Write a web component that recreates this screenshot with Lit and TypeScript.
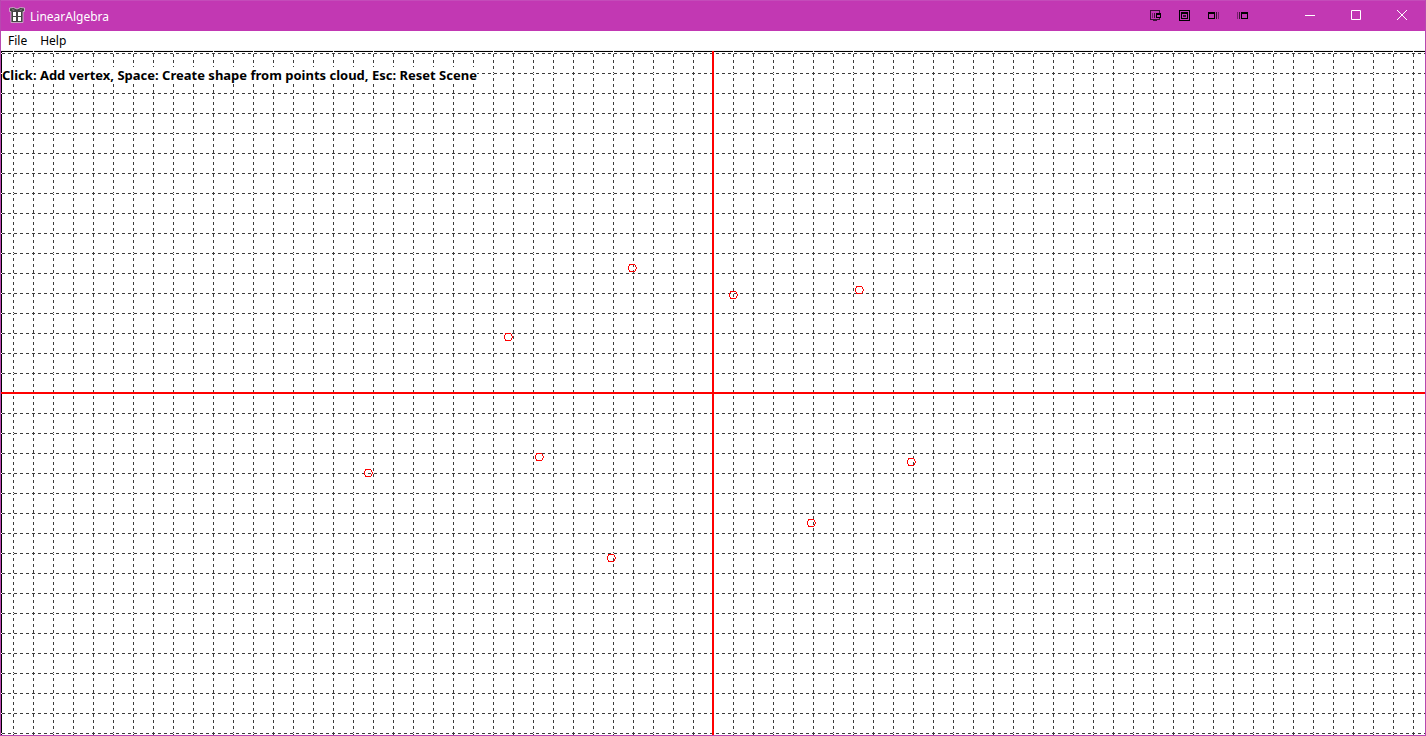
import { LitElement, html, css, svg } from "lit";
import { customElement, state } from "lit/decorators.js";

type Point = [number, number];

/** Window title bar with system tools and caption buttons. */
@customElement("title-bar")
class TitleBar extends LitElement {
  static styles = css`
    :host {
      display: flex;
      align-items: flex-start;
      height: 31px;
      box-sizing: border-box;
      border-top: 1px solid #c44cba;
      background: #c238b3;
      color: #fff;
      font: 12px/16px "Noto Sans", "Open Sans", sans-serif;
    }
    svg { display: block; }
    .logo { margin: 6px 5px 0 8px; }
    h1 { flex: 1; margin: 0; font: inherit; padding-top: 8px; }
    button {
      display: flex;
      align-items: center;
      justify-content: center;
      padding: 0;
      border: 0;
      background: none;
      color: inherit;
      height: 28px;
    }
    .tools { display: flex; margin-right: 30px; }
    .tools button { width: 29px; }
    .caption { display: flex; }
    .caption button { width: 46px; }
  `;

  render() {
    return html`
      <svg class="logo" width="16" height="16" viewBox="0 0 16 16">
        <path d="M.5 1l4-.5L8 2l3.500-1.500L15.500 1v3.500H14v11H2v-11H.5z" fill="#444" stroke="#d9c3d6" stroke-width=".8" />
        <path d="M4 5h3v4H4zM9 5h3v4H9zM4 10h3v4H4zM9 10h3v4H9z" fill="#fff" />
        <path d="M3 2l3 1-2 1zM13 2l-3 1 2 1z" fill="#888" />
      </svg>
      <h1>LinearAlgebra</h1>
      <div class="tools">
        <button aria-label="Dock window">
          <svg width="11" height="11" shape-rendering="crispEdges">
            <path d="M.5.5h9v9h-9z" fill="none" stroke="#3a1136" />
            <path d="M2 3h1v5H2z" fill="#761f6d" />
            <path d="M4 3h1v5H4zM3 10h4v1H3z" fill="#3a1136" />
            <path d="M6 3h5v5H6z" />
            <path d="M7 5h3v2H7z" fill="#c238b3" />
          </svg>
        </button>
        <button aria-label="Center window">
          <svg width="11" height="11" shape-rendering="crispEdges">
            <path d="M.5.5h10v10H.5zM2.5 2.5h6v6h-6z" fill="none" stroke="#000" />
            <path d="M2 2h7v2H2z" />
            <path d="M4 5h3v2H4z" fill="#3a1136" />
          </svg>
        </button>
        <button aria-label="Move to left monitor">
          <svg width="11" height="11" shape-rendering="crispEdges">
            <path d="M.5 2.5h6v6h-6z" fill="none" stroke="#000" />
            <path d="M0 2h7v2H0z" />
            <path d="M8 2h1v7H8z" fill="#3a1136" />
            <path d="M10 2h1v7h-1z" fill="#761f6d" />
          </svg>
        </button>
        <button aria-label="Move to right monitor">
          <svg width="11" height="11" shape-rendering="crispEdges">
            <path d="M4.5 2.5h6v6h-6z" fill="none" stroke="#000" />
            <path d="M4 2h7v2H4z" />
            <path d="M2 2h1v7H2z" fill="#3a1136" />
            <path d="M0 2h1v7H0z" fill="#761f6d" />
          </svg>
        </button>
      </div>
      <div class="caption">
        <button aria-label="Minimize">
          <svg width="10" height="10" stroke="#fff"><path d="M0 5.5h10" /></svg>
        </button>
        <button aria-label="Maximize">
          <svg width="10" height="10" stroke="#fff" fill="none"><path d="M.5.5h9v9h-9z" /></svg>
        </button>
        <button aria-label="Close">
          <svg width="10" height="10" stroke="#fff"><path d="M0 0l10 10M10 0L0 10" /></svg>
        </button>
      </div>
    `;
  }
}

/** Drawing surface: dotted grid, axes through the centre and the vertices. */
@customElement("grid-scene")
class GridScene extends LitElement {
  static styles = css`
    :host {
      display: block;
      position: relative;
      overflow: hidden;
      background: #fff;
    }
    .canvas { position: absolute; inset: 0; width: 100%; height: 100%; }
    .hint {
      position: relative;
      display: inline-block;
      margin: 16px 0 0 1px;
      background: #fff;
      color: #000;
      font: bold 13px/16px "Noto Sans", "Open Sans", sans-serif;
      white-space: nowrap;
    }
  `;

  @state() points: Point[] = [
    [-81, -125], [20, -98], [146, -103], [-205, -56],
    [-345, 80], [-174, 64], [198, 69], [98, 130], [-102, 165],
  ];
  @state() private size = { w: 1424, h: 684 };

  private observer = new ResizeObserver(([entry]) => {
    this.size = { w: entry.contentRect.width, h: entry.contentRect.height };
  });

  connectedCallback() {
    super.connectedCallback();
    this.observer.observe(this);
  }

  disconnectedCallback() {
    super.disconnectedCallback();
    this.observer.disconnect();
  }

  render() {
    const { w, h } = this.size;
    const cx = Math.floor(w / 2);
    const cy = Math.floor(h / 2);
    const step = 20;
    let columns = "";
    let rows = "";
    for (let x = cx % step; x < w; x += step) columns += `M${x + 0.5} 0V${h}`;
    for (let y = cy % step; y < h; y += step) rows += `M0 ${y + 0.5}H${w}`;
    return html`
      <svg class="canvas" shape-rendering="crispEdges" fill="none">
        <path d="M0 .5H${w}M.5 0V${h}" stroke="#000" />
        <path d=${columns} stroke="#fff" />
        <path d=${columns} stroke="#3c3c3c" stroke-dasharray="3" stroke-dashoffset="3" />
        <path d=${rows} stroke="#fff" />
        <path d=${rows} stroke="#3c3c3c" stroke-dasharray="3" stroke-dashoffset="5" />
        <path d="M${cx} 0V${h}M0 ${cy}H${w}" stroke="#f00" stroke-width="2" />
        <g stroke="#f00">
          ${this.points.map(([x, y]) => svg`
            <path d="M${cx + x - 2.5} ${cy + y - 3.5}h5l1 1v1l1 1v1l-1 1v1l-1 1h-5v-1l-1-1v-3l1-1z" />`)}
        </g>
      </svg>
      <p class="hint">Click: Add vertex, Space: Create shape from points cloud, Esc: Reset Scene</p>
    `;
  }
}

@customElement("app-root")
class AppRoot extends LitElement {
  static styles = css`
    :host {
      display: flex;
      flex-direction: column;
      height: 100vh;
      box-sizing: border-box;
      border: solid #b848b0;
      border-width: 0 1px 1px 1px;
      background: #fff;
    }
    nav {
      display: flex;
      gap: 1px;
      padding-left: 1px;
      height: 20px;
      box-sizing: border-box;
      border-bottom: 1px solid #f0f0f0;
    }
    nav button {
      padding: 0 6px;
      border: 0;
      background: none;
      color: #000;
      font: 12px/20px "Noto Sans", "Open Sans", sans-serif;
    }
    grid-scene { flex: 1; }
  `;

  render() {
    return html`
      <title-bar></title-bar>
      <nav aria-label="Menu">
        <button>File</button>
        <button>Help</button>
      </nav>
      <grid-scene></grid-scene>
    `;
  }
}
